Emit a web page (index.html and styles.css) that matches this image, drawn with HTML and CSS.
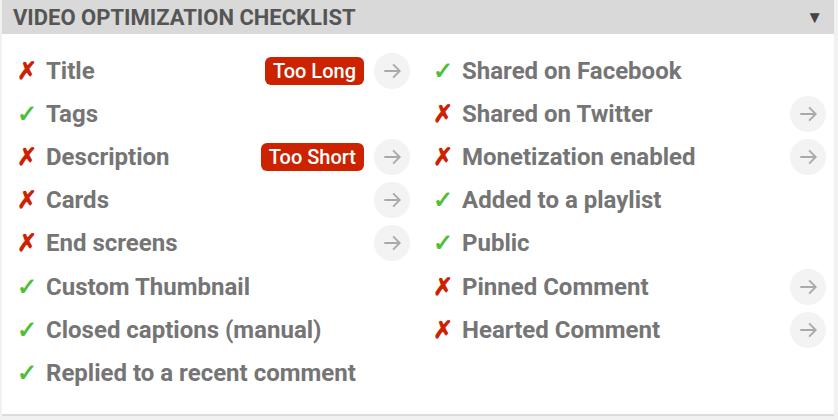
FILE: index.html
```html
<!DOCTYPE html>
<html lang="en">
<head>
  <meta charset="UTF-8">
  <meta name="viewport" content="width=device-width, initial-scale=1.0">
  <title>Video Optimization Checklist</title>
  <link rel="stylesheet" href="styles.css">
</head>
<body>
  <div class="panel">
    <div class="panel-head">
      <h2>VIDEO OPTIMIZATION CHECKLIST</h2>
      <span class="toggle">&#9660;</span>
    </div>

    <div class="checklist">
      <ul class="col">
        <li class="item bad">
          <span class="mark">&#10007;</span><span class="label">Title</span>
          <span class="badge">Too Long</span>
          <a class="go" href="#"><svg viewBox="0 0 20 20"><path d="M3 10h14M11 4l6 6-6 6"/></svg></a>
        </li>
        <li class="item good">
          <span class="mark">&#10003;</span><span class="label">Tags</span>
        </li>
        <li class="item bad">
          <span class="mark">&#10007;</span><span class="label">Description</span>
          <span class="badge">Too Short</span>
          <a class="go" href="#"><svg viewBox="0 0 20 20"><path d="M3 10h14M11 4l6 6-6 6"/></svg></a>
        </li>
        <li class="item bad">
          <span class="mark">&#10007;</span><span class="label">Cards</span>
          <a class="go" href="#"><svg viewBox="0 0 20 20"><path d="M3 10h14M11 4l6 6-6 6"/></svg></a>
        </li>
        <li class="item bad">
          <span class="mark">&#10007;</span><span class="label">End screens</span>
          <a class="go" href="#"><svg viewBox="0 0 20 20"><path d="M3 10h14M11 4l6 6-6 6"/></svg></a>
        </li>
        <li class="item good">
          <span class="mark">&#10003;</span><span class="label">Custom Thumbnail</span>
        </li>
        <li class="item good">
          <span class="mark">&#10003;</span><span class="label">Closed captions (manual)</span>
        </li>
        <li class="item good">
          <span class="mark">&#10003;</span><span class="label">Replied to a recent comment</span>
        </li>
      </ul>

      <ul class="col">
        <li class="item good">
          <span class="mark">&#10003;</span><span class="label">Shared on Facebook</span>
        </li>
        <li class="item bad">
          <span class="mark">&#10007;</span><span class="label">Shared on Twitter</span>
          <a class="go" href="#"><svg viewBox="0 0 20 20"><path d="M3 10h14M11 4l6 6-6 6"/></svg></a>
        </li>
        <li class="item bad">
          <span class="mark">&#10007;</span><span class="label">Monetization enabled</span>
          <a class="go" href="#"><svg viewBox="0 0 20 20"><path d="M3 10h14M11 4l6 6-6 6"/></svg></a>
        </li>
        <li class="item good">
          <span class="mark">&#10003;</span><span class="label">Added to a playlist</span>
        </li>
        <li class="item good">
          <span class="mark">&#10003;</span><span class="label">Public</span>
        </li>
        <li class="item bad">
          <span class="mark">&#10007;</span><span class="label">Pinned Comment</span>
          <a class="go" href="#"><svg viewBox="0 0 20 20"><path d="M3 10h14M11 4l6 6-6 6"/></svg></a>
        </li>
        <li class="item bad">
          <span class="mark">&#10007;</span><span class="label">Hearted Comment</span>
          <a class="go" href="#"><svg viewBox="0 0 20 20"><path d="M3 10h14M11 4l6 6-6 6"/></svg></a>
        </li>
      </ul>
    </div>
  </div>
</body>
</html>
```

FILE: styles.css
```css
body {
  margin: 0;
  padding: 0 4px 0 2px;
  background-color: #f1f1f1;
  font-family: Roboto, "Liberation Sans", Arial, sans-serif;
}

.panel {
  background: #fff;
  border-bottom: 2px solid #dcdcdc;
  height: 416px;
  box-sizing: border-box;
}

.panel-head {
  display: flex;
  align-items: center;
  justify-content: space-between;
  height: 34px;
  padding: 0 11px 0 11px;
  background-color: #d9d9d9;
}

.panel-head h2 {
  margin: 0;
  font-size: 22px;
  font-weight: 700;
  color: #555;
}

.toggle {
  font-size: 17px;
  color: #444;
}

.checklist {
  display: grid;
  grid-template-columns: 1fr 1fr;
  padding-top: 15px;
}

.col {
  list-style: none;
  margin: 0;
  padding: 0 8px 0 15px;
}

.item {
  display: flex;
  align-items: center;
  height: 43.2px;
}

.mark {
  width: 29px;
  font-size: 24px;
  font-weight: 700;
}

.bad .mark {
  color: #cc2200;
}

.good .mark {
  color: #4fbf3a;
}

.label {
  flex: 1;
  font-size: 24px;
  font-weight: 700;
  color: #757575;
}

.badge {
  background-color: #cc2200;
  color: #fff;
  font-size: 20px;
  font-weight: 500;
  padding: 2px 8px;
  border-radius: 6px;
  margin-right: 10px;
}

.go {
  display: flex;
  align-items: center;
  justify-content: center;
  width: 36px;
  height: 36px;
  border-radius: 50%;
  background-color: #f3f3f3;
}

.go svg {
  width: 22px;
  height: 22px;
  fill: none;
  stroke: #aaa;
  stroke-width: 1.7;
}
```
